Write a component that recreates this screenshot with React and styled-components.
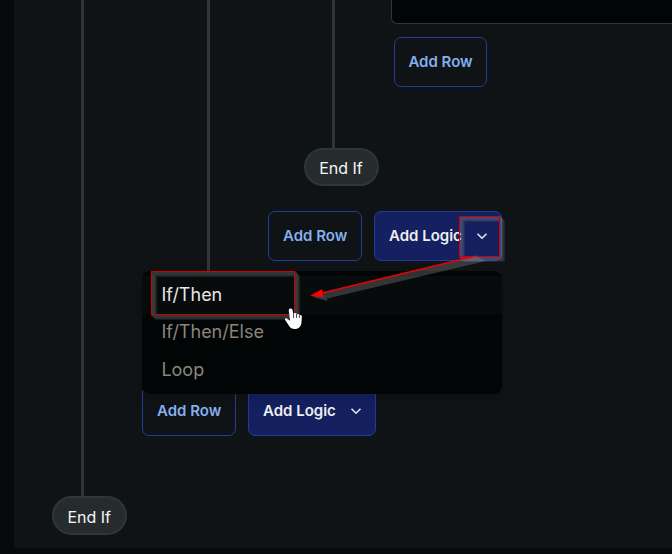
import React from "react";
import styled, { createGlobalStyle } from "styled-components";

const Global = createGlobalStyle`
  *, *::before, *::after { box-sizing: border-box; }
  body { margin: 0; background: #07090a; font-family: Inter, sans-serif; overflow: hidden; }
`;

const Page = styled.div`
  position: relative;
  width: 672px;
  height: 554px;
  padding-left: 14px;
  overflow: hidden;
  background: #07090a;
`;

const Canvas = styled.main`
  height: 548px;
  padding-left: 38px;
  background: #0f1315;
`;

const Block = styled.section`
  margin-left: ${(p) => (p.$nested ? "36px" : "0")};
`;

const Body = styled.div`
  display: flex;
  height: ${(p) => p.$height}px;
`;

const Rail = styled.div`
  flex: 0 0 90px;
  &::before {
    content: "";
    display: block;
    width: 3px;
    height: 100%;
    margin-left: ${(p) => p.$inset}px;
    background: #2e3638;
  }
`;

const Content = styled.div`
  flex: 1 0 auto;
`;

const EndPill = styled.div`
  display: flex;
  align-items: center;
  justify-content: center;
  width: 75px;
  height: ${(p) => p.$height || 38}px;
  padding: 2px ${(p) => p.$nudge || 0}px 0 0;
  border: 2px solid #2e3638;
  border-radius: 20px;
  background: #262b2d;
  color: #f6f6f6;
  font-size: 16px;
  line-height: 20px;
`;

const Code = styled.div`
  width: 300px;
  height: 24px;
  margin: 0 0 13px -3px;
  border: 1px solid #303638;
  border-top: 0;
  border-radius: 0 0 0 6px;
  background: #020506;
`;

const Actions = styled.div`
  display: flex;
  gap: 12px;
  margin-top: ${(p) => p.$top || 0}px;
`;

const Button = styled.button`
  display: flex;
  align-items: center;
  width: ${(p) => p.$width || 94}px;
  height: 50px;
  padding: 0 13px 0 ${(p) => p.$inset || 14}px;
  border: 1px solid #243c97;
  border-radius: 7px;
  background: ${(p) => (p.$primary ? "#14205f" : "transparent")};
  color: ${(p) => (p.$primary ? "#eeeeee" : "#84b0f0")};
  font: 600 15px/20px Inter, sans-serif;
  white-space: nowrap;
  svg { margin-left: auto; flex: none; }
`;

const Menu = styled.ul`
  position: absolute;
  left: 142px;
  top: 271px;
  width: 360px;
  height: 123px;
  margin: 0;
  padding: 5px 0;
  list-style: none;
  border-radius: 8px;
  background: #020506;
  box-shadow: 0 4px 12px rgba(0, 0, 0, 0.15);
`;

const Item = styled.li`
  display: flex;
  align-items: center;
  height: ${(p) => p.$height}px;
  padding-left: 19.4px;
  background: ${(p) => (p.$active ? "#080b0c" : "transparent")};
  color: ${(p) => (p.$active ? "#e8e6e2" : "#8c857a")};
  font-size: 18px;
  line-height: 24px;
`;

const Overlay = styled.svg`
  position: absolute;
  inset: 0;
  pointer-events: none;
`;

const Chevron = () => (
  <svg width="12" height="8" viewBox="0 0 12 8" fill="none" stroke="#e8e8e8" strokeWidth="1.6">
    <path d="M1.5 1.8 6 6.2 10.5 1.8" />
  </svg>
);

const AddRow = ({ width, inset }) => <Button $width={width} $inset={inset}>Add Row</Button>;
const AddLogic = () => (
  <Button $primary $width={128}>Add Logic<Chevron /></Button>
);

const shades = ["#a0a0a0", "#a8a8a8", "#989898", "#7c7c7c", "#505050"];

const Frame = ({ x, y, w, h }) => (
  <g fill="none">
    <g opacity="0.32" strokeWidth="1.4">
      {[5, 4, 3, 2, 1].map((d) => (
        <rect key={d} x={x + d - 0.3} y={y + d - 0.3} width={w} height={h} stroke={shades[d - 1]} />
      ))}
    </g>
    <rect x={x} y={y} width={w} height={h} stroke="#d00000" />
  </g>
);

export default function App() {
  return (
    <>
      <Global />
      <Page>
        <Canvas>
          <Block>
            <Body $height={496}>
              <Rail $inset={29} />
              <Content>
                <Block $nested>
                  <Body $height={360}>
                    <Rail $inset={29} />
                    <Content>
                      <Block $nested>
                        <Body $height={148}>
                          <Rail $inset={28} />
                          <Content>
                            <Code />
                            <AddRow width={93} inset={13.4} />
                          </Content>
                        </Body>
                        <EndPill $nudge={1}>End If</EndPill>
                      </Block>
                      <Actions $top={25}>
                        <AddRow />
                        <AddLogic />
                      </Actions>
                    </Content>
                  </Body>
                </Block>
                <Actions $top={26}>
                  <AddRow />
                  <AddLogic />
                </Actions>
              </Content>
            </Body>
            <EndPill $height={39} $nudge={0.5}>End If</EndPill>
          </Block>
        </Canvas>
        <Menu>
          <Item $active $height={38}>If/Then</Item>
          <Item $height={36}>If/Then/Else</Item>
          <Item $height={39}>Loop</Item>
        </Menu>
        <Overlay width="672" height="554" viewBox="0 0 672 554">
          <Frame x={459.5} y={216.5} w={40} h={40} />
          <Frame x={151.5} y={271.5} w={143} h={43} />
          <g opacity="0.3">
            <path d="M476 256 486 261 325 299 321 293Z" fill="#989898" />
            <path d="M313 297 323 292 328 301Z" fill="#a8a8a8" />
          </g>
          <path d="M476 256 322 293" stroke="#f00000" strokeWidth="1.4" />
          <path d="M310 296 322 289 323 297Z" fill="#ff0000" />
          <path
            d="M290.5 308.5c1.5 0 2 .8 2.2 2l.7 4 .8-1.6 2.1.3.6 1 1.7-.3 1 1.2 1.4 0 .9 1.5-.4 5.9c-.3 4-3 6.5-6.4 6.5-3.5 0-5.4-1.7-6.9-4.6l-3.2-4.6c-.4-1.2 1.1-2 2.3-1.1l2.8 2-1.3-10c-.1-1.3.4-2.1 1.7-2.2Z"
            fill="#fff"
          />
          <path d="M293.5 314v4M296.5 314v4M299.4 315v3" stroke="#202323" strokeWidth=".8" />
        </Overlay>
      </Page>
    </>
  );
}
